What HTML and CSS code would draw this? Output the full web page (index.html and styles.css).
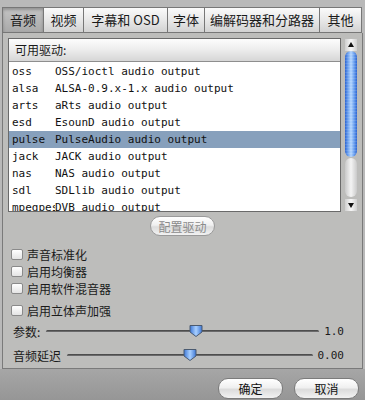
FILE: index.html
```html
<!DOCTYPE html>
<html>
<head>
    <title>音频设置</title>
    <meta name="viewport" content="width=device-width, initial-scale=1">
    <link rel="stylesheet" href="styles.css">
</head>
<body>
    <div class="dialog">
        <div class="tabs">
            <div class="tab active" style="width:42px">音频</div>
            <div class="tab" style="width:40px">视频</div>
            <div class="tab" style="width:84px">字幕和 OSD</div>
            <div class="tab" style="width:37px">字体</div>
            <div class="tab" style="width:115px">编解码器和分路器</div>
            <div class="tab" style="width:42px">其他</div>
        </div>

        <div class="panel">
            <div class="drivers">
                <div class="listbox">
                    <div class="list-head">可用驱动:</div>
                    <div class="row"><span class="name">oss</span><span>OSS/ioctl audio output</span></div>
                    <div class="row"><span class="name">alsa</span><span>ALSA-0.9.x-1.x audio output</span></div>
                    <div class="row"><span class="name">arts</span><span>aRts audio output</span></div>
                    <div class="row"><span class="name">esd</span><span>EsounD audio output</span></div>
                    <div class="row selected"><span class="name">pulse</span><span>PulseAudio audio output</span></div>
                    <div class="row"><span class="name">jack</span><span>JACK audio output</span></div>
                    <div class="row"><span class="name">nas</span><span>NAS audio output</span></div>
                    <div class="row"><span class="name">sdl</span><span>SDLlib audio output</span></div>
                    <div class="row"><span class="name">mpegpes</span><span>DVB audio output</span></div>
                </div>
                <div class="scrollbar">
                    <div class="arrow up"></div>
                    <div class="thumb"></div>
                    <div class="track"></div>
                    <div class="arrow down"></div>
                </div>
            </div>

            <div class="center">
                <button class="pill disabled">配置驱动</button>
            </div>

            <div class="options">
                <label class="check"><span class="box"></span>声音标准化</label>
                <label class="check"><span class="box"></span>启用均衡器</label>
                <label class="check"><span class="box"></span>启用软件混音器</label>
                <label class="check gap"><span class="box"></span>启用立体声加强</label>
            </div>

            <div class="slider-row">
                <span class="slider-label">参数:</span>
                <div class="slider">
                    <div class="line"></div>
                    <svg class="knob" style="left:55%" width="15" height="14" viewBox="0 0 15 14">
                        <defs>
                            <linearGradient id="kb1" x1="0" y1="0" x2="1" y2="0">
                                <stop offset="0" stop-color="#3d77d6"/>
                                <stop offset="0.5" stop-color="#a9d0ff"/>
                                <stop offset="1" stop-color="#3d77d6"/>
                            </linearGradient>
                        </defs>
                        <path d="M1.5 1.5 H13.5 V8 L7.5 12.5 L1.5 8 Z" fill="url(#kb1)" stroke="#4a5a70" stroke-width="1"/>
                    </svg>
                </div>
                <span class="value">1.0</span>
            </div>

            <div class="slider-row">
                <span class="slider-label">音频延迟</span>
                <div class="slider">
                    <div class="line"></div>
                    <svg class="knob" style="left:50%" width="15" height="14" viewBox="0 0 15 14">
                        <defs>
                            <linearGradient id="kb2" x1="0" y1="0" x2="1" y2="0">
                                <stop offset="0" stop-color="#3d77d6"/>
                                <stop offset="0.5" stop-color="#a9d0ff"/>
                                <stop offset="1" stop-color="#3d77d6"/>
                            </linearGradient>
                        </defs>
                        <path d="M1.5 1.5 H13.5 V8 L7.5 12.5 L1.5 8 Z" fill="url(#kb2)" stroke="#4a5a70" stroke-width="1"/>
                    </svg>
                </div>
                <span class="value">0.00</span>
            </div>
        </div>

        <div class="buttons">
            <button class="pill">确定</button>
            <button class="pill">取消</button>
        </div>
    </div>
</body>
</html>
```

FILE: styles.css
```css
body {
    margin: 0;
    width: 365px;
    height: 400px;
    overflow: hidden;
    background: linear-gradient(#b9b9b9 0, #b9b9b9 369px, #a6a6a6 369px, #969696 400px);
    font-family: "Noto Sans CJK SC", sans-serif;
    font-size: 12px;
    color: #1a1a1a;
}

.dialog {
    padding: 7px 0 0 2px;
}

.tabs {
    display: flex;
    height: 26px;
}

.tab {
    box-sizing: border-box;
    height: 26px;
    line-height: 24px;
    text-align: center;
    font-size: 13px;
    border: 1px solid #777;
    border-left: none;
    background: linear-gradient(#fafafa, #e6e6e6 55%, #d2d2d2);
    white-space: nowrap;
}

.tab:first-child {
    border-left: 1px solid #777;
}

.tab.active {
    background: linear-gradient(#c4c4c4, #b4b4b4 60%, #a9a9a9);
    box-shadow: inset 0 2px 3px rgba(0, 0, 0, 0.25);
}

.panel {
    box-sizing: border-box;
    width: 361px;
    height: 336px;
    border: 1px solid #7a7a7a;
    border-top: none;
    background: #bdbdbb;
    padding: 5px 0 0 5px;
}

.drivers {
    display: flex;
    height: 174px;
}

.listbox {
    box-sizing: border-box;
    width: 333px;
    height: 174px;
    border: 1px solid #6a6a6a;
    background: #fff;
    overflow: hidden;
}

.list-head {
    box-sizing: border-box;
    height: 23px;
    line-height: 21px;
    padding-left: 6px;
    border-bottom: 1px solid #8e8e8e;
    background: linear-gradient(#fdfdfd, #ececec 50%, #d6d6d6);
    margin-bottom: 1px;
}

.row {
    display: flex;
    height: 17px;
    line-height: 17px;
    padding-left: 3px;
    font-family: "DejaVu Sans Mono", monospace;
    font-size: 11px;
    color: #111;
    white-space: nowrap;
}

.row .name {
    width: 43px;
    overflow: hidden;
}

.row.selected {
    background: #87a0bc;
}

.scrollbar {
    display: flex;
    flex-direction: column;
    width: 12px;
    margin-left: 4px;
    padding: 1px 0;
}

.arrow {
    height: 12px;
    background: linear-gradient(to right, #cfcfcf, #f7f7f7 50%, #cfcfcf);
    position: relative;
}

.arrow::after {
    content: "";
    position: absolute;
    left: 3px;
    border-left: 3px solid transparent;
    border-right: 3px solid transparent;
}

.arrow.up::after {
    top: 3px;
    border-bottom: 5px solid #111;
}

.arrow.down::after {
    top: 4px;
    border-top: 5px solid #111;
}

.thumb {
    height: 106px;
    border-radius: 6px;
    background:
        repeating-linear-gradient(rgba(255, 255, 255, 0.12) 0 1px, transparent 1px 3px),
        linear-gradient(to right, #2c64d0, #6da2f0 25%, #b4d6ff 50%, #6da2f0 75%, #2c64d0);
}

.track {
    flex: 1;
    border-radius: 6px;
    margin: 1px 0 2px;
    background: linear-gradient(to right, #c9c9c9, #f4f4f4 50%, #c9c9c9);
}

.center {
    display: flex;
    justify-content: center;
    padding-right: 5px;
    margin-top: 4px;
}

.pill {
    box-sizing: border-box;
    height: 20px;
    width: 65px;
    padding: 0;
    border: 1px solid #7b7b7b;
    border-radius: 10px;
    background: linear-gradient(#ffffff, #f0f0f0 45%, #dcdcdc 55%, #f2f2f2);
    font-family: "Noto Sans CJK SC", sans-serif;
    font-size: 12px;
    color: #111;
}

.pill.disabled {
    color: #8b8b8b;
    border-color: #9a9a9a;
}

.options {
    display: flex;
    flex-direction: column;
    margin-top: 10px;
}

.check {
    display: flex;
    align-items: center;
    height: 17px;
    padding-left: 3px;
}

.check.gap {
    margin-top: 5px;
}

.box {
    box-sizing: border-box;
    width: 12px;
    height: 11px;
    margin-right: 4px;
    border: 1px solid #8a8a8a;
    border-radius: 2px;
    background: linear-gradient(#ffffff, #e4e4e4);
}

.slider-row {
    display: flex;
    align-items: center;
    height: 24px;
    padding: 0 18px 0 5px;
}

.slider-label {
    margin-right: 6px;
}

.slider {
    flex: 1;
    position: relative;
    height: 14px;
}

.line {
    position: absolute;
    left: 0;
    right: 0;
    top: 6px;
    height: 3px;
    border-radius: 2px;
    background: linear-gradient(#3f3f3f, #6a6a6a 50%, #e8e8e8);
}

.knob {
    position: absolute;
    top: 0;
    transform: translateX(-50%);
}

.value {
    margin-left: 5px;
    font-family: "DejaVu Sans Mono", monospace;
    font-size: 11px;
}

.buttons {
    display: flex;
    justify-content: flex-end;
    gap: 11px;
    padding: 9px 6px 0 0;
}

.buttons .pill {
    height: 21px;
    width: 65px;
}
```
